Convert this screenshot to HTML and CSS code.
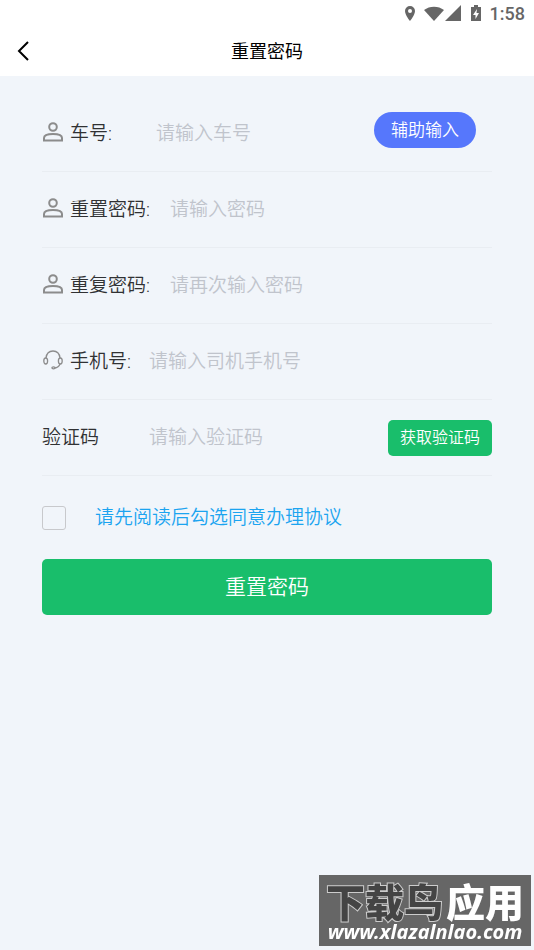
FILE: index.html
```html
<!DOCTYPE html>
<html lang="zh-CN">
<head>
<meta charset="utf-8">
<meta name="viewport" content="width=device-width, initial-scale=1">
<title>重置密码</title>
<link rel="stylesheet" href="styles.css">
</head>
<body>
<svg class="defs" aria-hidden="true">
  <symbol id="person" viewBox="0 0 20 20">
    <circle cx="10" cy="5" r="3.800"/>
    <path d="M1 18.500v-2.500C1 13.200 5.500 12 10 12s9 1.200 9 4v2.500z"/>
  </symbol>
  <symbol id="headset" viewBox="0 0 20 20">
    <path d="M3 8C3.500 3.800 6.200 1 10 1s6.500 2.800 7 7M17 14c-.8 2.300-2.800 3.700-5.500 4"/>
    <ellipse cx="2.700" cy="11" rx="1.900" ry="3"/>
    <ellipse cx="17.300" cy="11" rx="1.900" ry="3"/>
    <ellipse class="solid" cx="10.500" cy="17.800" rx="1.600" ry="1"/>
  </symbol>
</svg>

<div class="status">
  <svg width="12" height="18" viewBox="0 0 12 18"><path fill-rule="evenodd" d="M6 1a5 5 0 0 0-5 5c0 4 5 10 5 10s5-6 5-10a5 5 0 0 0-5-5zm0 3a2 2 0 1 1 0 4 2 2 0 0 1 0-4z"/></svg>
  <svg class="wifi" width="20" height="18" viewBox="0 0 20 18"><path d="M0 5C5.500.500 14.500.500 20 5L10 16z"/></svg>
  <svg width="16" height="18" viewBox="0 0 16 18"><path d="M16 0v16H0z"/></svg>
  <svg class="battery" width="12" height="18" viewBox="0 0 12 18"><path fill-rule="evenodd" d="M4 0h4v2h3v14H1V2h3zM7 4L3 10h2.500v4L9 8H6.500z"/></svg>
  <span>1:58</span>
</div>

<header class="bar">
  <button class="back" type="button" aria-label="返回">
    <svg width="12" height="20" viewBox="0 0 12 20"><path d="M11 1L2 10l9 9"/></svg>
  </button>
  <h1>重置密码</h1>
</header>

<form class="form">
  <div class="row">
    <svg class="icon"><use href="#person"/></svg>
    <label class="wide" for="car">车号:</label>
    <input id="car" type="text" placeholder="请输入车号">
    <button class="assist" type="button">辅助输入</button>
  </div>
  <div class="row">
    <svg class="icon"><use href="#person"/></svg>
    <label for="pwd">重置密码:</label>
    <input id="pwd" type="password" placeholder="请输入密码">
  </div>
  <div class="row">
    <svg class="icon"><use href="#person"/></svg>
    <label for="pwd2">重复密码:</label>
    <input id="pwd2" type="password" placeholder="请再次输入密码">
  </div>
  <div class="row">
    <svg class="icon thin"><use href="#headset"/></svg>
    <label class="phone" for="phone">手机号:</label>
    <input id="phone" type="tel" placeholder="请输入司机手机号">
  </div>
  <div class="row">
    <label class="code" for="code">验证码</label>
    <input id="code" type="text" placeholder="请输入验证码">
    <button class="send" type="button">获取验证码</button>
  </div>
  <div class="agree">
    <input id="agree" type="checkbox" aria-label="同意办理协议">
    <a href="#agreement">请先阅读后勾选同意办理协议</a>
  </div>
  <button class="submit" type="submit">重置密码</button>
</form>

<div class="mark">
  <div class="name"><span class="dark">下载鸟</span><span>应用</span></div>
  <div class="site">www.xlazalnlao.com</div>
</div>
</body>
</html>
```

FILE: styles.css
```css
* { box-sizing: border-box; }

body {
  margin: 0;
  min-height: 100vh;
  background: #f1f5fa;
  color: #303133;
  font: 350 19px/28px Roboto, "Noto Sans CJK SC", sans-serif;
}

button, input { font: inherit; border: 0; padding: 0; }
svg { display: block; flex: none; }
.defs { position: absolute; width: 0; height: 0; }

.status {
  display: flex;
  justify-content: flex-end;
  align-items: center;
  height: 28px;
  padding-right: 9px;
  background: #fff;
  color: #666;
  font-size: 18px;
  font-weight: 500;
}
.status svg { fill: #666; }
.status .wifi { margin-left: 8px; }
.status .wifi + svg { margin-left: 1px; }
.status .battery { margin: 0 8px 0 9px; }

.bar {
  display: grid;
  grid-template-columns: 48px 1fr 48px;
  align-items: center;
  height: 48px;
  background: #fff;
  color: #000;
}
.back {
  display: flex;
  align-items: center;
  height: 48px;
  padding: 0 0 2px 17px;
  background: none;
}
.back path { fill: none; stroke: #000; stroke-width: 2; }
.bar h1 {
  margin: 0;
  text-align: center;
  font-size: 18px;
  font-weight: 400;
}

.form { padding: 20px 42px 0; }

.row {
  display: flex;
  align-items: center;
  height: 76px;
  border-bottom: 1px solid #e9edf2;
}
.icon {
  width: 20px;
  height: 20px;
  margin: 0 7px 4px 1px;
  fill: none;
  stroke: #8c8c8c;
  stroke-width: 2;
}
.thin { stroke-width: 1.3; }
.icon .solid { fill: #8c8c8c; }
.row label { margin-right: 20px; white-space: nowrap; }
.row .wide { margin-right: 44px; }
.row .phone { margin-right: 18px; }
.row .code { margin-right: 50px; }
.row input {
  flex: 1;
  min-width: 0;
  height: 28px;
  background: none;
  outline: 0;
}
.row input::placeholder { color: #c0c4cc; opacity: 1; }

.assist {
  height: 36px;
  margin: 0 16px 8px 0;
  padding: 0 17px;
  border-radius: 18px;
  background: #5677fc;
  color: #fff;
  font-size: 17px;
}
.send {
  height: 36px;
  padding: 0 12px;
  border-radius: 5px;
  background: #19be6b;
  color: #fff;
  font-size: 16px;
}

.agree {
  display: flex;
  align-items: center;
  gap: 29px;
  height: 83px;
}
.agree input {
  appearance: none;
  width: 24px;
  height: 24px;
  margin: 0;
  border: 1px solid #c8c9cc;
  border-radius: 3px;
}
.agree a { color: #1ba4f0; text-decoration: none; }

.submit {
  width: 100%;
  height: 56px;
  border-radius: 5px;
  background: #19be6b;
  color: #fff;
  font-size: 21px;
}

.mark {
  position: fixed;
  right: 3px;
  bottom: 4px;
  width: 212px;
  height: 71px;
  padding-top: 4px;
  background: #666;
  color: #fff;
  text-align: center;
  white-space: nowrap;
}
.name {
  display: flex;
  justify-content: center;
  gap: 3px;
  font: 900 39px/42px "Noto Sans CJK SC", sans-serif;
}
.dark {
  color: #444;
  -webkit-text-stroke: 2px #ccc;
  paint-order: stroke fill;
}
.site {
  font: italic 700 20px/22px "Noto Sans", sans-serif;
}
```
